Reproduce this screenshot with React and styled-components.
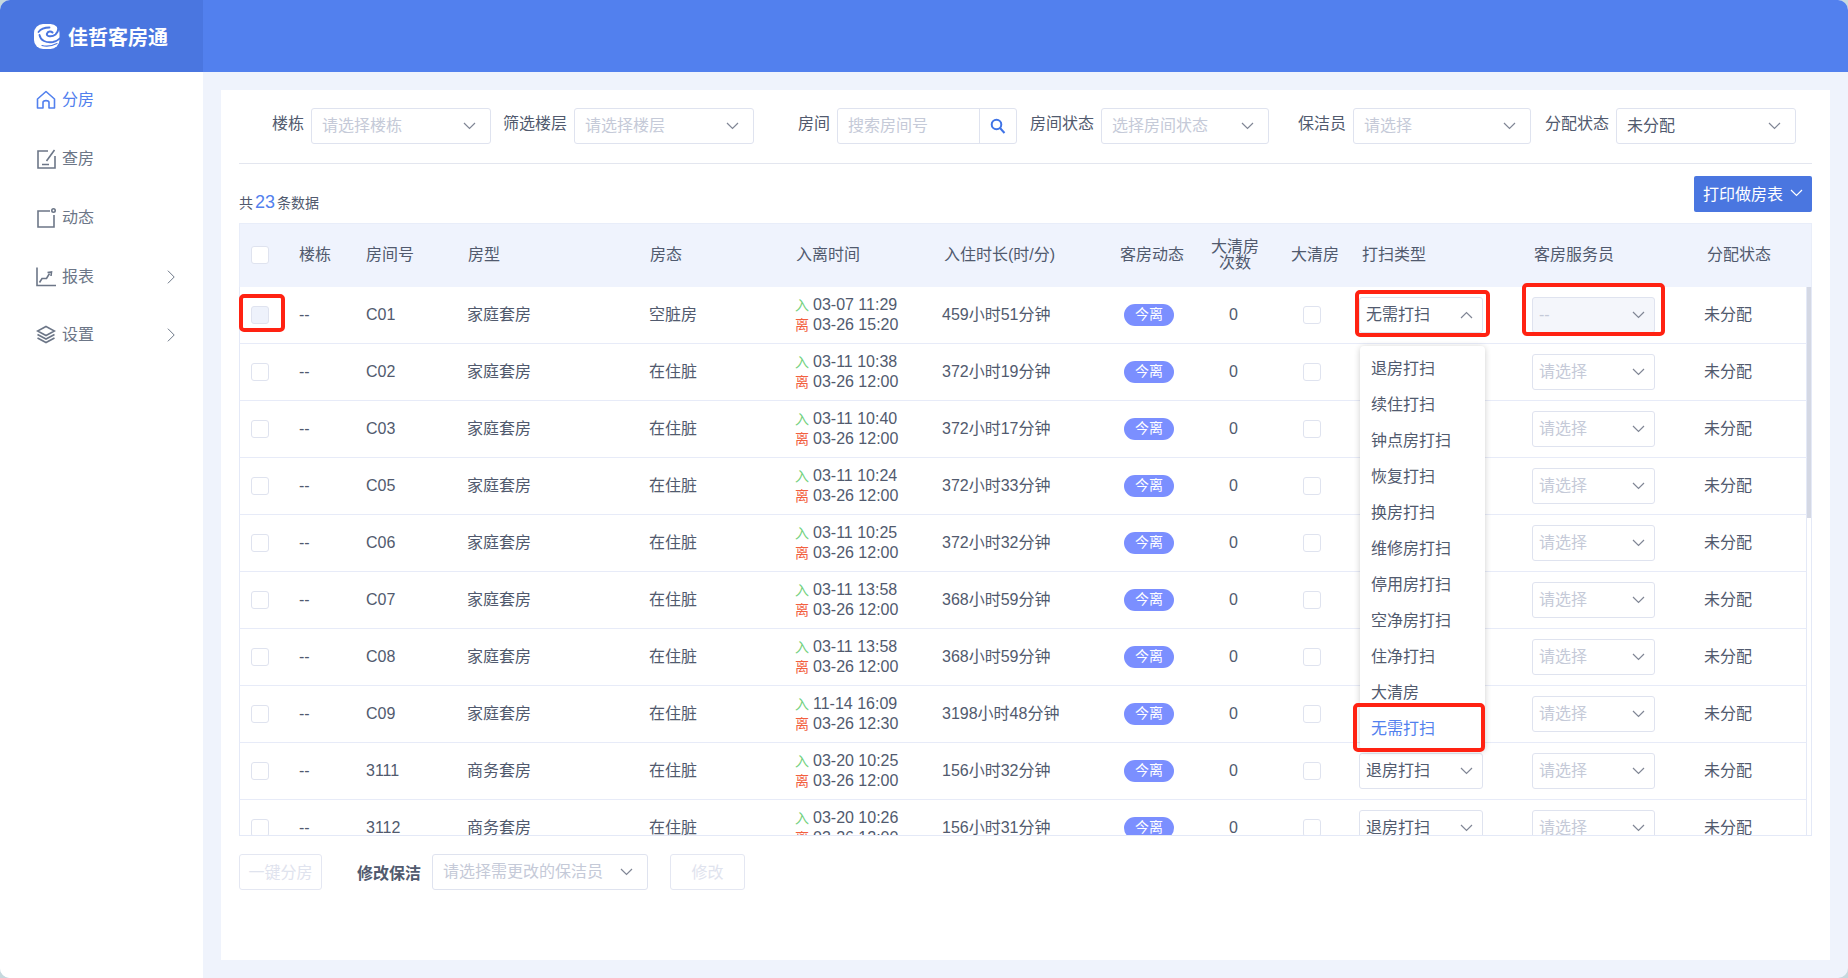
import styled, { createGlobalStyle } from "styled-components"

const GlobalStyle = createGlobalStyle`
    html, body {
        margin : 0;
        padding : 0;
        background : #c6d9de;
    }
    * {
        box-sizing : border-box;
    }
    body {
        font-family : "Liberation Sans", "Noto Sans CJK SC", sans-serif;
        font-size : 16px;
        color : #515a6e;
    }
`
const Page = styled.div`
    display : grid;
    grid-template-columns : 203px 1fr;
    grid-template-rows : 72px 1fr;
    height : 100vh;
    overflow : hidden;
    border-radius : 10px;
    background : #eff3fc;
`
const Brand = styled.div`
    display : flex;
    align-items : center;
    gap : 8px;
    padding-left : 34px;
    background : #4a76e0;
    color : #fff;
    font-size : 20px;
    font-weight : 700;
`
const TopBar = styled.div`
    background : #5280ee;
`
const Sidebar = styled.nav`
    background : #fff;
`
const NavItem = styled.div`
    display : flex;
    align-items : center;
    height : 58.75px;
    padding : 0 27px 0 36px;
    color : ${props => props.$active ? "#5280ee" : "#6c7687"};
    &:first-child {
        margin-top : -1px;
    }
`
const NavIcon = styled.svg`
    width : 20px;
    height : 20px;
    margin-right : 6px;
    flex : none;
    fill : none;
    stroke : currentColor;
    stroke-width : 1.6;
`
const NavArrow = styled.svg`
    width : 9px;
    height : 16px;
    flex : none;
    fill : none;
    stroke : currentColor;
    stroke-width : 1.1;
`
const NavLabel = styled.span`
    flex : 1;
    line-height : 20px;
`
const Main = styled.main`
    display : flex;
    padding : 18px;
    min-height : 0;
`
const Card = styled.section`
    flex : 1;
    min-width : 0;
    padding : 18px 18px 0;
    background : #fff;
`
const Filters = styled.div`
    display : flex;
    align-items : flex-start;
    height : 56px;
    padding-left : 33px;
    border-bottom : 1px solid #e3e6ef;
`
const FilterGroup = styled.div`
    display : flex;
    margin-left : ${props => props.$offset || 0}px;
`
const FilterLabel = styled.label`
    margin-right : 7px;
    line-height : 32px;
    white-space : nowrap;
`
const Select = styled.div`
    position : relative;
    display : flex;
    align-items : center;
    justify-content : space-between;
    flex : none;
    width : ${props => props.$width}px;
    height : 36px;
    padding : 0 ${props => props.$tight ? 9 : 14}px 0 ${props => props.$tight ? 6 : 10}px;
    border : 1px solid #dfe3ef;
    border-radius : 3px;
    background : ${props => props.$disabled ? "#f4f6fb" : "#fff"};
    color : ${props => props.$placeholder ? "#c5cad8" : "#515a6e"};
    line-height : 20px;
    white-space : nowrap;
`
const Arrow = styled.svg`
    width : 13px;
    height : 8px;
    flex : none;
    fill : none;
    stroke : ${props => props.$light ? "#fff" : "#808695"};
    stroke-width : 1.2;
`
const SearchBox = styled.div`
    display : flex;
    width : 180px;
    height : 36px;
    border : 1px solid #dfe3ef;
    border-radius : 3px;
`
const SearchInput = styled.input`
    flex : 1;
    min-width : 0;
    padding : 0 0 0 10px;
    border : none;
    border-right : 1px solid #dfe3ef;
    outline : none;
    background : transparent;
    font : inherit;
    &::placeholder {
        color : #c5cad8;
    }
`
const SearchButton = styled.div`
    display : flex;
    align-items : center;
    justify-content : center;
    width : 36px;
    color : #3f73e6;
`
const CountRow = styled.div`
    display : flex;
    justify-content : space-between;
    padding-top : 12px;
    margin-bottom : 11px;
`
const Count = styled.div`
    align-self : flex-end;
    font-size : 14px;
    line-height : 18px;
    color : #515a6e;
`
const CountNumber = styled.span`
    margin : 0 2px;
    font-size : 18px;
    color : #5280ee;
`
const PrintButton = styled.button`
    display : flex;
    align-items : center;
    gap : 7px;
    width : 118px;
    height : 36px;
    padding : 0 0 2px 9px;
    border : none;
    border-radius : 2px;
    background : #4a76e0;
    color : #fff;
    font : inherit;
`
const Table = styled.div`
    position : relative;
    border-bottom : 1px solid #e4e9f7;
`
const HeadRow = styled.div`
    display : grid;
    grid-template-columns : 59px 67px 102px 182px 146px 148px 176px 91px 80px 71px 172px 173px 1fr;
    align-items : center;
    height : 64px;
    padding-bottom : 2px;
    border : 1px solid #e8edf9;
    border-bottom : none;
    background : #eff3fd;
`
const HeadCell = styled.div`
    line-height : 16px;
    text-align : ${props => props.$center ? "center" : "left"};
    margin-right : ${props => props.$center ? 32 : 0}px;
`
const Scroller = styled.div`
    height : 548px;
    padding-right : 4px;
    overflow : hidden;
    border-right : 1px solid #e4e9f7;
`
const ScrollThumb = styled.span`
    position : absolute;
    top : 64px;
    right : 1px;
    width : 4px;
    height : 231px;
    background : #d4d8e4;
`
const Row = styled.div`
    display : grid;
    grid-template-columns : 59px 67px 101px 182px 146px 147px 182px 105px 74px 56px 173px 172px 1fr;
    align-items : center;
    height : 57px;
    border-left : 1px solid #e4e9f7;
    border-right : 1px solid #e4e9f7;
    border-bottom : 1px solid #e7ebf8;
`
const Cell = styled.div`
    white-space : nowrap;
    line-height : 20px;
`
const Box = styled.span`
    display : block;
    width : 18px;
    height : 18px;
    margin-left : ${props => props.$indent || 0}px;
    border : 1px solid #dfe3ef;
    border-radius : 3px;
    background : ${props => props.$filled ? "#eef2fb" : "#fff"};
`
const Times = styled.div`
    font-size : 16px;
    line-height : 19px;
    white-space : nowrap;
`
const TimeTag = styled.span`
    margin-right : 4px;
    font-size : 14px;
    color : ${props => props.$out ? "#f2603f" : "#72d17e"};
`
const Pill = styled.span`
    display : block;
    width : 50px;
    height : 22px;
    border-radius : 11px;
    background : #7b8fff;
    color : #fff;
    font-size : 14px;
    line-height : 21px;
    text-align : center;
`
const Menu = styled.ul`
    position : absolute;
    top : 48px;
    left : 0;
    z-index : 3;
    width : 125px;
    margin : 0;
    padding : 4px 0;
    list-style : none;
    border-radius : 4px;
    background : #fff;
    box-shadow : 0 1px 6px rgba(0,0,0,0.2);
`
const MenuItem = styled.li`
    position : relative;
    height : 36px;
    padding-left : 11px;
    line-height : 38px;
    color : ${props => props.$selected ? "#5280ee" : "#515a6e"};
`
const RedMark = styled.span`
    position : absolute;
    inset : ${props => props.$inset};
    z-index : 4;
    border : 4px solid #ff2212;
    border-radius : 5px;
    pointer-events : none;
`
const Actions = styled.div`
    display : flex;
    align-items : center;
    margin-top : 18px;
`
const GhostButton = styled.button`
    width : ${props => props.$width}px;
    height : 36px;
    margin-left : ${props => props.$before || 0}px;
    margin-right : ${props => props.$after || 0}px;
    padding : 0 0 2px;
    border : 1px solid #e4e7f2;
    border-radius : 3px;
    background : #fff;
    color : #dfe3ee;
    font : inherit;
`
const ActionLabel = styled.span`
    margin-right : 11px;
    font-weight : 700;
    color : #515a6e;
`

const Chevron = ({ up, light }) => (
    <Arrow viewBox="0 0 13 8" $light={light}>
        <polyline points={up ? "1,7 6.5,1.5 12,7" : "1,1 6.5,6.5 12,1"} />
    </Arrow>
)

const SideArrow = () => (
    <NavArrow viewBox="0 0 10 16">
        <polyline points="1,1 8,8 1,15" />
    </NavArrow>
)

const rooms = [
    ["C01", "家庭套房", "空脏房", "03-07 11:29", "03-26 15:20", "459小时51分钟"],
    ["C02", "家庭套房", "在住脏", "03-11 10:38", "03-26 12:00", "372小时19分钟"],
    ["C03", "家庭套房", "在住脏", "03-11 10:40", "03-26 12:00", "372小时17分钟"],
    ["C05", "家庭套房", "在住脏", "03-11 10:24", "03-26 12:00", "372小时33分钟"],
    ["C06", "家庭套房", "在住脏", "03-11 10:25", "03-26 12:00", "372小时32分钟"],
    ["C07", "家庭套房", "在住脏", "03-11 13:58", "03-26 12:00", "368小时59分钟"],
    ["C08", "家庭套房", "在住脏", "03-11 13:58", "03-26 12:00", "368小时59分钟"],
    ["C09", "家庭套房", "在住脏", "11-14 16:09", "03-26 12:30", "3198小时48分钟"],
    ["3111", "商务套房", "在住脏", "03-20 10:25", "03-26 12:00", "156小时32分钟"],
    ["3112", "商务套房", "在住脏", "03-20 10:26", "03-26 12:00", "156小时31分钟"],
]
const cleanTypes = ["退房打扫", "续住打扫", "钟点房打扫", "恢复打扫", "换房打扫", "维修房打扫", "停用房打扫", "空净房打扫", "住净打扫", "大清房", "无需打扫"]
const headers = ["楼栋", "房间号", "房型", "房态", "入离时间", "入住时长(时/分)", "客房动态"]

const Logo = () => (
    <svg width="26" height="27" viewBox="0 0 26 27" fill="none" strokeLinecap="round">
        <rect x="0" y="1" width="25.5" height="25" rx="9" fill="#fff" />
        <path d="M21 -1 C25 3 25.5 8 21.5 11.5 C17.5 14.5 12 13.5 13 10.5 C14 8 17 8 18.5 9.5" stroke="#4a76e0" strokeWidth="2" />
        <path d="M5.5 12 C6.5 17.5 12 20 19 19 C22 18.5 24.5 17 27 14.5" stroke="#4a76e0" strokeWidth="1.8" />
        <path d="M4.5 9 C7 5.5 11 4.5 15.5 4.5" stroke="#4a76e0" strokeWidth="1.8" />
        <path d="M8 22.5 C13 24 18 23 23 20.5" stroke="#4a76e0" strokeWidth="1.2" />
    </svg>
)

const App = () => {
    return (
        <Page>
            <GlobalStyle />
            <Brand>
                <Logo />
                佳哲客房通
            </Brand>
            <TopBar />
            <Sidebar>
                <NavItem $active>
                    <NavIcon viewBox="0 0 20 20">
                        <path d="M1.5 9 L10 1.5 L18.5 9 V18 H13 V12.5 C13 10 7 10 7 12.5 V18 H1.5 Z" strokeLinejoin="round" />
                    </NavIcon>
                    <NavLabel>分房</NavLabel>
                </NavItem>
                <NavItem>
                    <NavIcon viewBox="0 0 20 20">
                        <path d="M12 2 H2 V19 H19 V7" />
                        <path d="M18.5 1 L10.5 12" />
                        <path d="M6 15.5 H13" />
                    </NavIcon>
                    <NavLabel>查房</NavLabel>
                </NavItem>
                <NavItem>
                    <NavIcon viewBox="0 0 20 20">
                        <path d="M14 3 H2 V19 H18 V7" />
                        <circle cx="17.5" cy="2.5" r="1.7" />
                    </NavIcon>
                    <NavLabel>动态</NavLabel>
                </NavItem>
                <NavItem>
                    <NavIcon viewBox="0 0 20 20">
                        <path d="M1 0.5 V18.5 H20" />
                        <path d="M3.5 15.5 L6 11.5 H10.5 L13.5 6.5" />
                        <path d="M11.5 5.5 L15.5 5 L15 9" />
                    </NavIcon>
                    <NavLabel>报表</NavLabel>
                    <SideArrow />
                </NavItem>
                <NavItem>
                    <NavIcon viewBox="0 0 20 20">
                        <path d="M10 1.5 L18.5 6 L10 10.5 L1.5 6 Z" />
                        <path d="M1.5 9.5 L10 14 L18.5 9.5" />
                        <path d="M1.5 13 L10 17.5 L18.5 13" />
                    </NavIcon>
                    <NavLabel>设置</NavLabel>
                    <SideArrow />
                </NavItem>
            </Sidebar>
            <Main>
                <Card>
                    <Filters>
                        <FilterGroup>
                            <FilterLabel>楼栋</FilterLabel>
                            <Select $width={180} $placeholder>请选择楼栋<Chevron /></Select>
                        </FilterGroup>
                        <FilterGroup $offset={12}>
                            <FilterLabel>筛选楼层</FilterLabel>
                            <Select $width={180} $placeholder>请选择楼层<Chevron /></Select>
                        </FilterGroup>
                        <FilterGroup $offset={44}>
                            <FilterLabel>房间</FilterLabel>
                            <SearchBox>
                                <SearchInput placeholder="搜索房间号" readOnly />
                                <SearchButton>
                                    <svg width="16" height="16" viewBox="0 0 16 16" fill="none" stroke="currentColor" strokeWidth="2">
                                        <circle cx="6.5" cy="6.5" r="4.8" />
                                        <path d="M10 10 L14.5 15" />
                                    </svg>
                                </SearchButton>
                            </SearchBox>
                        </FilterGroup>
                        <FilterGroup $offset={13}>
                            <FilterLabel>房间状态</FilterLabel>
                            <Select $width={168} $placeholder>选择房间状态<Chevron /></Select>
                        </FilterGroup>
                        <FilterGroup $offset={29}>
                            <FilterLabel>保洁员</FilterLabel>
                            <Select $width={178} $placeholder>请选择<Chevron /></Select>
                        </FilterGroup>
                        <FilterGroup $offset={14}>
                            <FilterLabel>分配状态</FilterLabel>
                            <Select $width={180}>未分配<Chevron /></Select>
                        </FilterGroup>
                    </Filters>
                    <CountRow>
                        <Count>共<CountNumber>23</CountNumber>条数据</Count>
                        <PrintButton>打印做房表<Chevron light /></PrintButton>
                    </CountRow>
                    <Table>
                        <HeadRow>
                            <Box $indent={11} />
                            {headers.map(title => <HeadCell key={title}>{title}</HeadCell>)}
                            <HeadCell $center>大清房<br />次数</HeadCell>
                            <HeadCell>大清房</HeadCell>
                            <HeadCell>打扫类型</HeadCell>
                            <HeadCell>客房服务员</HeadCell>
                            <HeadCell>分配状态</HeadCell>
                        </HeadRow>
                        <Scroller>
                            {rooms.map((room, index) => {
                                const first = index === 0
                                // rows 2 to 8 sit under the open menu, their select is never seen
                                const covered = index > 0 && index < 8
                                return (
                                    <Row key={room[0]}>
                                        <Box $indent={11} $filled={first} />
                                        <Cell>--</Cell>
                                        <Cell>{room[0]}</Cell>
                                        <Cell>{room[1]}</Cell>
                                        <Cell>{room[2]}</Cell>
                                        <Times>
                                            <div><TimeTag>入</TimeTag>{room[3]}</div>
                                            <div><TimeTag $out>离</TimeTag>{room[4]}</div>
                                        </Times>
                                        <Cell>{room[5]}</Cell>
                                        <Pill>今离</Pill>
                                        <Cell>0</Cell>
                                        <Box />
                                        {covered ? <Cell /> : (
                                            <Select $width={124} $tight>
                                                {first ? "无需打扫" : "退房打扫"}
                                                <Chevron up={first} />
                                                {first && <RedMark $inset="-8px -8px -5px -5px" />}
                                                {first && (
                                                    <Menu>
                                                        {cleanTypes.map(type => (
                                                            <MenuItem key={type} $selected={type === "无需打扫"}>
                                                                {type}
                                                                {type === "无需打扫" && <RedMark $inset="-7px 0 -6px -7px" />}
                                                            </MenuItem>
                                                        ))}
                                                    </Menu>
                                                )}
                                            </Select>
                                        )}
                                        <Select $width={123} $tight $placeholder $disabled={first}>
                                            {first ? "--" : "请选择"}
                                            <Chevron />
                                        </Select>
                                        <Cell>未分配</Cell>
                                    </Row>
                                )
                            })}
                        </Scroller>
                        <ScrollThumb />
                        <RedMark $inset="71px 1527px 503px 0" />
                        <RedMark $inset="60px 147px 499px 1283px" />
                    </Table>
                    <Actions>
                        <GhostButton $width={83} $after={35}>一键分房</GhostButton>
                        <ActionLabel>修改保洁</ActionLabel>
                        <Select $width={216} $placeholder>请选择需更改的保洁员<Chevron /></Select>
                        <GhostButton $width={75} $before={22}>修改</GhostButton>
                    </Actions>
                </Card>
            </Main>
        </Page>
    )
}

export default App
